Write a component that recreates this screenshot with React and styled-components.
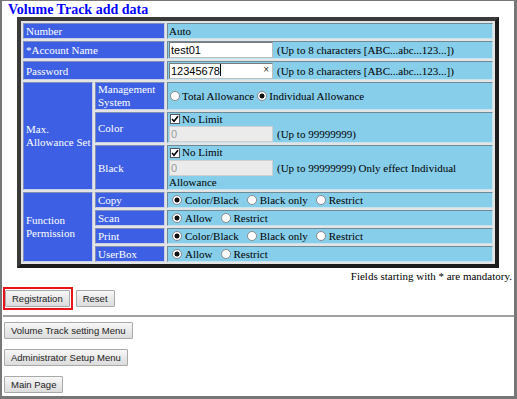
import React from 'react';
import styled, { createGlobalStyle } from 'styled-components'

const Global = createGlobalStyle`
    html, body { margin: 0; padding: 0; background: #fff; }
`

const Frame = styled('div')`
    box-sizing: border-box;
    width: 517px;
    height: 399px;
    border-style: solid;
    border-color: #777;
    border-width: 1px 3px 3px 2px;
    padding: 1px 0 0 0;
    font-family: "Liberation Serif", "Times New Roman", serif;
`

const Title = styled('div')`
    margin-left: 6px;
    font-size: 14px;
    line-height: 15px;
    font-weight: bold;
    color: #0000ff;
`

const Table = styled('table')`
    width: 482px;
    margin: 0 auto;
    border-collapse: separate;
    border-spacing: 2px;
    border: 4px solid;
    border-color: #3a3a3a #1c1c1c #1c1c1c #3a3a3a;
    background: #e4e4e4;
    font-size: 11px;
    line-height: 14px;
`

const Label = styled('td')`
    background: #3d5fe4;
    color: #fff;
    padding: 0 ${p => (p.$w ? 0 : 2)}px 0 2px;
    border: 1px solid;
    border-color: #7f8fb8 #c8d0e8 #c8d0e8 #7f8fb8;
    vertical-align: middle;
    line-height: ${p => (p.$tight ? 13 : 14)}px;
    width: ${p => p.$w || 'auto'};
`

const Value = styled('td')`
    background: #87ceeb;
    color: #000;
    padding: 0 1px;
    border: 1px solid;
    border-color: #6d8a99 #c6e4ef #c6e4ef #6d8a99;
    vertical-align: middle;
`

const Line = styled('div')`
    display: flex;
    align-items: center;
    white-space: nowrap;
    line-height: ${p => (p.$tight ? 13 : 14)}px;
`

const InputWrap = styled('span')`
    position: relative;
    display: inline-block;
    margin: 0 4px 0 0;
`

const TextInput = styled('input')`
    box-sizing: border-box;
    width: 104px;
    height: 16px;
    margin: 0;
    padding: 0 1px;
    border: 1px solid;
    border-color: ${p => (p.disabled ? '#cfcfcf' : '#7a7a7a #bdbdbd #bdbdbd #7a7a7a')};
    background: ${p => (p.disabled ? '#ebebeb' : '#fff')};
    color: ${p => (p.disabled ? '#9a9a9a' : '#000')};
    font-family: "Liberation Sans", Arial, sans-serif;
    font-size: 11px;
    outline: none;
    vertical-align: middle;
`

const Caret = styled('span')`
    position: absolute;
    left: 51px;
    top: 2px;
    width: 1px;
    height: 12px;
    background: #000;
`

const Clear = styled('span')`
    position: absolute;
    right: 4px;
    top: 1px;
    font-family: "Liberation Sans", Arial, sans-serif;
    font-size: 10px;
    line-height: 14px;
    color: #333;
`

const Radio = styled('input').attrs({ type: 'radio', readOnly: true })`
    appearance: none;
    box-sizing: border-box;
    width: 10px;
    height: 10px;
    margin: 0 ${p => p.$gap}px 0 ${p => p.$lead}px;
    border: 1px solid #8a8a8a;
    border-radius: 50%;
    background: #fff;
    flex: none;
    &:checked {
        background: radial-gradient(circle, #111 0, #111 2.2px, #fff 2.8px);
    }
`

const Check = styled('span')`
    display: inline-flex;
    box-sizing: border-box;
    width: 10px;
    height: 10px;
    margin: 0 2px 0 1px;
    border: 1px solid #555;
    background: #fff;
    flex: none;
`

const Note = styled('div')`
    text-align: right;
    font-size: 11px;
    line-height: 14px;
    padding-right: 2px;
    margin-top: 1px;
`

const ButtonRow = styled('div')`
    display: flex;
    align-items: center;
    gap: 3px;
    height: ${p => p.$h || 17}px;
    margin: ${p => p.$m || '0'};
    padding-left: ${p => p.$pl || 2}px;
`

const RedBox = styled('div')`
    display: inline-flex;
    border: 2px solid #e8141a;
    padding: 1px 1px 1px 0;
`

const Button = styled('button')`
    box-sizing: border-box;
    height: 17px;
    padding: 0 6px;
    margin: 0;
    border: 1px solid #a9a9a9;
    border-radius: 1px;
    background: linear-gradient(#f7f7f7, #dcdcdc);
    color: #222;
    font-family: "Liberation Sans", Arial, sans-serif;
    font-size: 9.5px;
    line-height: 15px;
`

const Rule = styled('hr')`
    margin: 5px 0 5px 1px;
    border: 0;
    border-top: 2px solid #a0a0a0;
`

const Tick = () => (
    <Check>
        <svg width="8" height="8" viewBox="0 0 8 8">
            <path d="M1 4 L3 6.2 L7 1.2" fill="none" stroke="#000" strokeWidth="1.6" />
        </svg>
    </Check>
)

const Options = ({ items, checked, lead, gap, between }) => (
    <Line>
        {items.map((t, i) => (
            <React.Fragment key={t}>
                <Radio checked={i === checked} $lead={i === 0 ? lead : between} $gap={gap} />
                <span>{t}</span>
            </React.Fragment>
        ))}
    </Line>
)

const Permission = ({ items }) => (
    <Options items={items} checked={0} lead={3} gap={3} between={8} />
)

const App = () => {
    return (
        <Frame>
            <Global />
            <Title>Volume Track add data</Title>
            <Table>
                <tbody>
                    <tr>
                        <Label colSpan={2}>Number</Label>
                        <Value>Auto</Value>
                    </tr>
                    <tr>
                        <Label colSpan={2}>*Account Name</Label>
                        <Value>
                            <Line>
                                <InputWrap><TextInput defaultValue="test01" /></InputWrap>
                                (Up to 8 characters [ABC...abc...123...])
                            </Line>
                        </Value>
                    </tr>
                    <tr>
                        <Label colSpan={2}>Password</Label>
                        <Value>
                            <Line>
                                <InputWrap>
                                    <TextInput defaultValue="12345678" />
                                    <Caret />
                                    <Clear>×</Clear>
                                </InputWrap>
                                (Up to 8 characters [ABC...abc...123...])
                            </Line>
                        </Value>
                    </tr>
                    <tr>
                        <Label rowSpan={3} $w="66px" $tight>Max.<br />Allowance Set</Label>
                        <Label $w="66px" $tight>Management<br />System</Label>
                        <Value>
                            <Options items={['Total Allowance', 'Individual Allowance']} checked={1} lead={1} gap={2} between={3} />
                        </Value>
                    </tr>
                    <tr>
                        <Label>Color</Label>
                        <Value>
                            <Line $tight><Tick />No Limit</Line>
                            <Line>
                                <InputWrap><TextInput disabled defaultValue="0" /></InputWrap>
                                (Up to 99999999)
                            </Line>
                        </Value>
                    </tr>
                    <tr>
                        <Label>Black</Label>
                        <Value>
                            <Line $tight><Tick />No Limit</Line>
                            <Line>
                                <InputWrap><TextInput disabled defaultValue="0" /></InputWrap>
                                (Up to 99999999) Only effect Individual
                            </Line>
                            <Line $tight>Allowance</Line>
                        </Value>
                    </tr>
                    <tr>
                        <Label rowSpan={4} $tight>Function<br />Permission</Label>
                        <Label>Copy</Label>
                        <Value><Permission items={['Color/Black', 'Black only', 'Restrict']} /></Value>
                    </tr>
                    <tr>
                        <Label>Scan</Label>
                        <Value><Permission items={['Allow', 'Restrict']} /></Value>
                    </tr>
                    <tr>
                        <Label>Print</Label>
                        <Value><Permission items={['Color/Black', 'Black only', 'Restrict']} /></Value>
                    </tr>
                    <tr>
                        <Label>UserBox</Label>
                        <Value><Permission items={['Allow', 'Restrict']} /></Value>
                    </tr>
                </tbody>
            </Table>
            <Note>Fields starting with * are mandatory.</Note>
            <ButtonRow $m="4px 0 0 0" $pl={1} $h={23}>
                <RedBox><Button>Registration</Button></RedBox>
                <Button>Reset</Button>
            </ButtonRow>
            <Rule />
            <ButtonRow><Button>Volume Track setting Menu</Button></ButtonRow>
            <ButtonRow $m="10px 0 0 0"><Button>Administrator Setup Menu</Button></ButtonRow>
            <ButtonRow $m="10px 0 0 0"><Button>Main Page</Button></ButtonRow>
        </Frame>
    );
};

export default App;
